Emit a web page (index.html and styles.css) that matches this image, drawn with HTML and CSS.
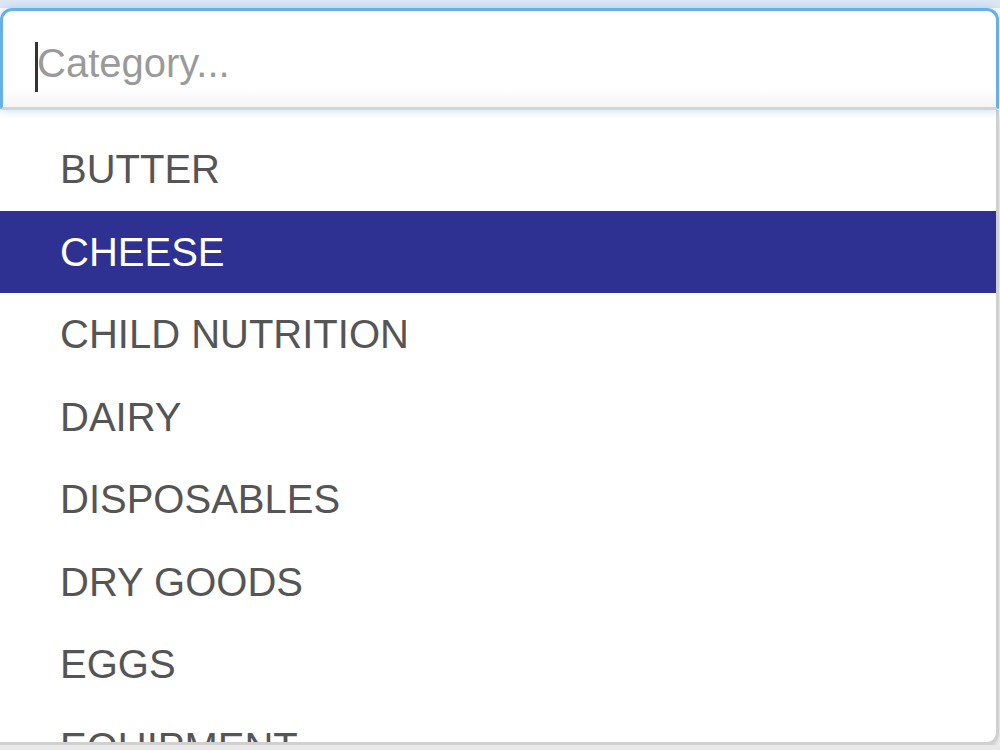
FILE: index.html
```html
<!DOCTYPE html>
<html lang="en">
<head>
    <meta charset="UTF-8">
    <meta name="viewport" content="width=device-width, initial-scale=1.0">
    <title>Category</title>
    <link rel="stylesheet" href="styles.css">
</head>
<body>
    <div class="picker">
        <div class="field">
            <input type="text" class="field-input" placeholder="Category...">
            <span class="caret"></span>
        </div>
        <ul class="menu">
            <li class="menu-item">BUTTER</li>
            <li class="menu-item active">CHEESE</li>
            <li class="menu-item">CHILD NUTRITION</li>
            <li class="menu-item">DAIRY</li>
            <li class="menu-item">DISPOSABLES</li>
            <li class="menu-item">DRY GOODS</li>
            <li class="menu-item">EGGS</li>
            <li class="menu-item">EQUIPMENT</li>
            <li class="menu-item">FROZEN</li>
        </ul>
    </div>
</body>
</html>
```

FILE: styles.css
```css
/* general */
html, body {
    margin: 0;
    padding: 0;
    background: #e9e9e9;
    overflow: hidden;
}

body {
    font-family: "Liberation Sans", Arial, sans-serif;
    background: linear-gradient(#dde7f3 0, #dde7f3 8px, #ffffff 8px);
}

.picker {
    width: 999px;
    padding-top: 8px;
}

/* input box */
.field {
    position: relative;
    height: 102px;
}

.field-input {
    box-sizing: border-box;
    width: 100%;
    height: 102px;
    margin: 0;
    padding: 8px 0 0 34px;
    border: 3px solid #66afe9;
    border-bottom-color: #d4d4d4;
    border-radius: 12px 12px 3px 3px;
    background: linear-gradient(#ffffff 80%, #f4f4f4);
    font-family: "Liberation Sans", Arial, sans-serif;
    font-size: 40px;
    color: #555;
    outline: none;
    box-shadow: 0 0 10px rgba(102, 175, 233, 0.45);
}

.field-input::placeholder {
    color: #9a9a9a;
}

.caret {
    position: absolute;
    left: 35px;
    top: 34px;
    width: 3px;
    height: 50px;
    background: #333;
}

/* dropdown */
.menu {
    list-style: none;
    margin: 0;
    padding: 18px 0 0;
    height: 614px;
    overflow: hidden;
    background: #fff;
    border: 3px solid #d0d0d0;
    border-top: none;
    border-left: none;
    border-radius: 0 0 12px 0;
    box-shadow: 0 6px 10px rgba(0, 0, 0, 0.22);
}

.menu-item {
    height: 82.5px;
    line-height: 82.5px;
    padding-left: 60px;
    font-size: 40px;
    color: #555;
    white-space: nowrap;
}

.menu-item.active {
    background-color: #2e3192;
    color: #fff;
}
```
